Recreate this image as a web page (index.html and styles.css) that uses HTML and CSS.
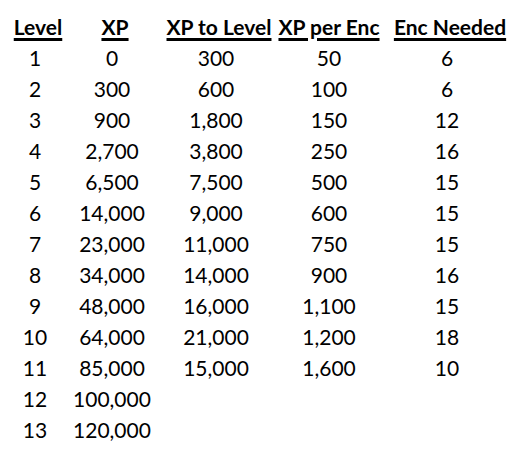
FILE: index.html
```html
<!DOCTYPE html>
<html>
<head>
<meta charset="utf-8">
<link rel="stylesheet" href="styles.css">
</head>
<body>
<table class="xp-table">
  <colgroup>
    <col class="c-level"><col class="c-xp"><col class="c-tolevel"><col class="c-perenc"><col class="c-needed">
  </colgroup>
  <thead>
    <tr><th><span>Level</span></th><th><span>XP</span></th><th><span>XP to Level</span></th><th class="h-tight"><span>XP per Enc</span></th><th><span>Enc Needed</span></th></tr>
  </thead>
  <tbody>
    <tr><td>1</td><td>0</td><td>300</td><td>50</td><td>6</td></tr>
    <tr><td>2</td><td>300</td><td>600</td><td>100</td><td>6</td></tr>
    <tr><td>3</td><td>900</td><td>1,800</td><td>150</td><td>12</td></tr>
    <tr><td>4</td><td>2,700</td><td>3,800</td><td>250</td><td>16</td></tr>
    <tr><td>5</td><td>6,500</td><td>7,500</td><td>500</td><td>15</td></tr>
    <tr><td>6</td><td>14,000</td><td>9,000</td><td>600</td><td>15</td></tr>
    <tr><td>7</td><td>23,000</td><td>11,000</td><td>750</td><td>15</td></tr>
    <tr><td>8</td><td>34,000</td><td>14,000</td><td>900</td><td>16</td></tr>
    <tr><td>9</td><td>48,000</td><td>16,000</td><td>1,100</td><td>15</td></tr>
    <tr><td>10</td><td>64,000</td><td>21,000</td><td>1,200</td><td>18</td></tr>
    <tr><td>11</td><td>85,000</td><td>15,000</td><td>1,600</td><td>10</td></tr>
    <tr><td>12</td><td>100,000</td><td></td><td></td><td></td></tr>
    <tr><td>13</td><td>120,000</td><td></td><td></td><td></td></tr>
  </tbody>
</table>
</body>
</html>
```
FILE: styles.css
```css
html, body {
  margin: 0;
  padding: 0;
  background: #ffffff;
}
body {
  padding-top: 11px;
  font-family: Lato, "Open Sans", sans-serif;
  font-size: 21px;
  color: #000000;
  overflow: hidden;
}
.xp-table {
  border-collapse: collapse;
  table-layout: fixed;
  width: 514px;
}
.c-level { width: 70px; }
.c-xp { width: 84px; }
.c-tolevel { width: 124px; }
.c-perenc { width: 102px; }
.c-needed { width: 134px; }
.xp-table th,
.xp-table td {
  padding: 0;
  height: 31px;
  line-height: 31px;
  text-align: center;
  white-space: nowrap;
  vertical-align: top;
}
.xp-table th {
  font-weight: 700;
  padding-left: 6px;
}
.xp-table th.h-tight {
  padding-left: 0;
}
.xp-table th span {
  text-decoration: underline;
  text-decoration-thickness: 2.5px;
  text-underline-offset: 3px;
}
```
